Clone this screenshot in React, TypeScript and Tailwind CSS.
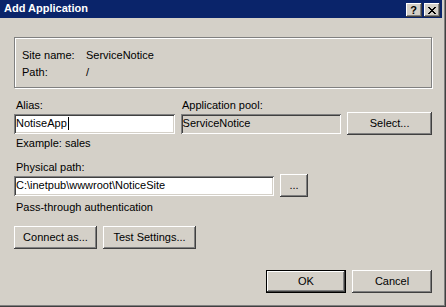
import React from "react";

const raised =
  "shadow-[inset_-1px_-1px_#404040,inset_1px_1px_#ffffff,inset_-2px_-2px_#808080,inset_2px_2px_#d4d0c8]";
const sunken =
  "shadow-[inset_1px_1px_#808080,inset_-1px_-1px_#ffffff,inset_2px_2px_#404040,inset_-2px_-2px_#d4d0c8]";

function Btn({ w, children, def }: { w: string; children: React.ReactNode; def?: boolean }) {
  if (def) {
    return (
      <div className={`${w} h-[23px] border border-black bg-[#d4d0c8] ${raised} flex items-center justify-center`}>
        {children}
      </div>
    );
  }
  return (
    <div className={`${w} h-[23px] bg-[#d4d0c8] ${raised} flex items-center justify-center`}>{children}</div>
  );
}

const xRows = ["11000011", "01100110", "00111100", "00011000", "00111100", "01100110", "11000011"];

function CloseGlyph() {
  return (
    <svg width="8" height="7" viewBox="0 0 8 7" shapeRendering="crispEdges">
      {xRows.flatMap((r, y) =>
        r.split("").map((c, x) => (c === "1" ? <rect key={`${x}-${y}`} x={x} y={y} width="1" height="1" fill="#000" /> : null))
      )}
    </svg>
  );
}

export default function App() {
  return (
    <div className="w-[446px] h-[307px] bg-[#d4d0c8] overflow-hidden font-['Liberation_Sans',Arial,sans-serif] text-[11px] leading-[13px] text-black shadow-[inset_-1px_-1px_#404040,inset_-2px_-2px_#808080]">
      {/* title bar */}
      <div className="h-[18px] w-[442px] bg-[#0a246a] flex items-start">
        <span className="text-white font-bold ml-[4px] mt-[2px]">Add Application</span>
        <div className="ml-auto mr-[2px] mt-[3px] flex gap-[2px]">
          <div className={`w-[16px] h-[14px] bg-[#d4d0c8] ${raised} flex items-center justify-center font-bold text-[11px] leading-[14px] pr-[1px]`}>
            ?
          </div>
          <div className={`w-[16px] h-[14px] bg-[#d4d0c8] ${raised} flex items-center justify-center pr-[1px]`}>
            <CloseGlyph />
          </div>
        </div>
      </div>

      <div className="ml-[14px] w-[418px] flex flex-col">
        {/* group box */}
        <div className="mt-[19px] h-[51px] border border-[#808080] shadow-[inset_1px_1px_#ffffff,1px_1px_#ffffff] pt-[11px] pl-[7px] flex flex-col gap-[4px]">
          <div className="flex">
            <span className="w-[64px]">Site name:</span>
            <span>ServiceNotice</span>
          </div>
          <div className="flex">
            <span className="w-[64px]">Path:</span>
            <span>/</span>
          </div>
        </div>

        {/* alias / pool labels */}
        <div className="mt-[11px] flex">
          <span className="w-[167px] pl-[2px]">Alias:</span>
          <span className="pl-[1px]">Application pool:</span>
        </div>
        <div className="flex items-center gap-[6px]">
          <div className={`w-[161px] h-[20px] bg-white ${sunken} flex items-center pl-[2px]`}>
            <span>NotiseApp</span>
            <span className="inline-block w-px h-[13px] bg-black ml-[1px]" />
          </div>
          <div className={`w-[161px] h-[20px] bg-[#d4d0c8] ${sunken} flex items-center pl-[2px]`}>
            <span>ServiceNotice</span>
          </div>
          <Btn w="w-[85px]">Select...</Btn>
        </div>

        <span className="mt-[2px] pl-[2px]">Example: sales</span>
        <span className="mt-[11px] pl-[2px]">Physical path:</span>
        <div className="flex items-center gap-[6px]">
          <div className={`w-[260px] h-[20px] bg-white ${sunken} flex items-center pl-[2px]`}>
            <span>{"C:\\inetpub\\wwwroot\\NoticeSite"}</span>
          </div>
          <Btn w="w-[28px]">...</Btn>
        </div>
        <span className="mt-[4px] pl-[2px]">Pass-through authentication</span>

        <div className="mt-[12px] flex gap-[6px]">
          <Btn w="w-[83px]">Connect as...</Btn>
          <Btn w="w-[93px]">Test Settings...</Btn>
        </div>

        <div className="mt-[21px] flex justify-end gap-[6px] pr-[0px]">
          <Btn w="w-[80px]" def>
            OK
          </Btn>
          <Btn w="w-[80px]">Cancel</Btn>
        </div>
      </div>
    </div>
  );
}
